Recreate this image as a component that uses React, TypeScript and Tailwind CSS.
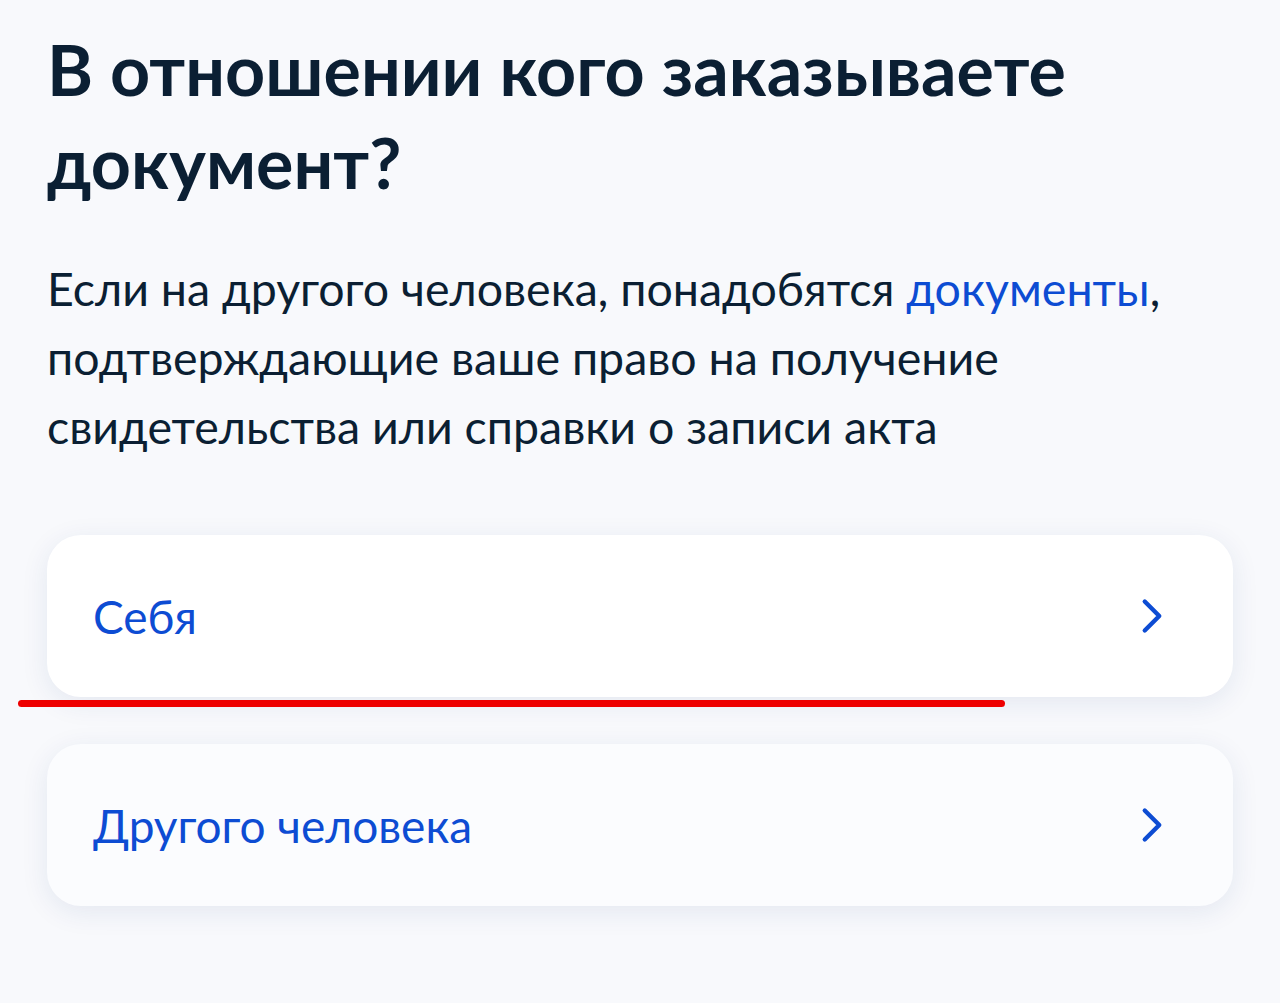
import { ChevronRight } from 'lucide-react';

const font = { fontFamily: 'Lato, "Noto Sans", sans-serif' };

function Option({ label, bg }: { label: string; bg: string }) {
    return (
        <div className={`flex items-center justify-between h-[162px] rounded-[34px] pl-[46px] pr-[52px] shadow-[0_6px_28px_rgba(20,50,120,0.09)] ${bg}`}>
            <span className="text-[46px] text-[#0d4cd3]">{label}</span>
            <ChevronRight className="w-[58px] h-[58px] text-[#0d4cd3]" strokeWidth={1.8} />
        </div>
    );
}

export default function App() {
    return (
        <div className="min-h-screen bg-[#f8f9fc] antialiased" style={font}>
            <div className="px-[47px] pt-[23px]">
                {/* Title */}
                <h1 className="text-[70px] leading-[93px] font-bold text-[#0b1f33]">
                    В отношении кого заказываете документ?
                </h1>

                {/* Hint */}
                <p className="mt-[45px] text-[46.5px] leading-[69px] text-[#0b1f33]">
                    Если на другого человека, понадобятся <span className="text-[#0d4cd3]">документы</span>,
                    подтверждающие ваше право на получение свидетельства или справки о записи акта
                </p>

                {/* Options */}
                <div className="relative mt-[74px] flex flex-col gap-[47px]">
                    <Option label="Себя" bg="bg-white" />
                    <Option label="Другого человека" bg="bg-[#fbfcfe]" />
                    <div className="absolute left-[-29px] top-[165px] w-[987px] h-[7px] rounded-full bg-[#ee0000]" />
                </div>
            </div>
        </div>
    );
}
